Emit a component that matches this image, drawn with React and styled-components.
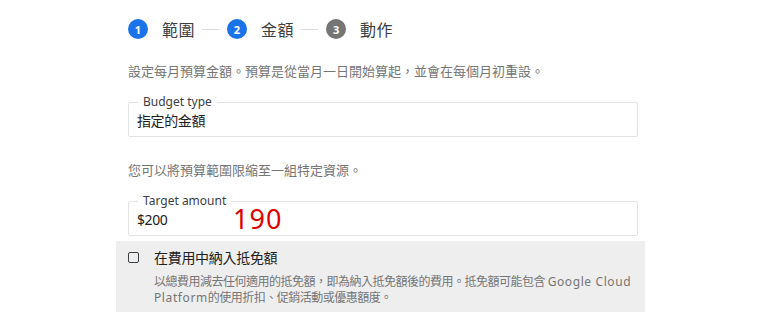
import React from "react";
import styled, { createGlobalStyle } from "styled-components";

const GlobalStyle = createGlobalStyle`
  body {
    margin: 0;
    background: #fff;
    font-family: "Noto Sans", "Noto Sans CJK TC", sans-serif;
    color: #212121;
  }
`;

const Page = styled.div`
  width: 760px;
  height: 330px;
  overflow: hidden;
`;

const Column = styled.div`
  margin-left: 128px;
  width: 510px;
  padding-top: 19px;
`;

// Stepper
const Steps = styled.div`
  display: flex;
  align-items: center;
  height: 20px;
`;

const StepDot = styled.span`
  width: 20px;
  height: 20px;
  border-radius: 50%;
  background: ${({ active }) => (active ? "#1a73e8" : "#757575")};
  color: #fff;
  font-size: 11px;
  font-weight: 700;
  display: flex;
  align-items: center;
  justify-content: center;
  flex: 0 0 auto;
`;

const StepLabel = styled.span`
  margin-left: 14px;
  font-size: 16px;
  color: #3c4043;
  letter-spacing: 0.5px;
`;

const StepLine = styled.span`
  width: 17px;
  height: 1px;
  background: #dadce0;
  margin: 0 8px 0 7px;
`;

const Desc = styled.p`
  margin: ${({ top }) => top}px 0 0;
  font-size: 13px;
  line-height: 18px;
  color: #757575;
  letter-spacing: 0;
`;

const Field = styled.fieldset`
  position: relative;
  margin: ${({ top }) => top}px 0 0;
  padding: 0 8px 4px;
  height: 41px;
  box-sizing: border-box;
  border: 1px solid #e3e3e3;
  border-radius: 2px;
`;

const Legend = styled.legend`
  font-size: 12px;
  color: #3c4043;
  padding: 0 5px;
  margin-left: 1px;
  line-height: 12px;
`;

const Value = styled.div`
  font-size: 14px;
  line-height: 18px;
  margin-top: 4px;
  color: #212121;
  letter-spacing: -0.4px;
`;

const Overlay = styled.span`
  position: absolute;
  left: 104px;
  top: -5px;
  font-size: 27px;
  line-height: 34px;
  color: #e00000;
  letter-spacing: 1px;
`;

const Panel = styled.div`
  margin: 5px 0 0 116px;
  width: 529px;
  height: 71px;
  background: #eeeeee;
  display: flex;
  box-sizing: border-box;
  padding: 9px 0 0 12px;
`;

const Box = styled.span`
  width: 9px;
  height: 9px;
  border: 1.5px solid #3c4043;
  border-radius: 2px;
  margin-top: 2px;
  flex: 0 0 auto;
`;

const PanelText = styled.div`
  margin-left: 15px;
`;

const CheckLabel = styled.div`
  font-size: 14px;
  line-height: 16px;
  color: #212121;
  letter-spacing: -0.3px;
`;

const Hint = styled.div`
  margin-top: 8px;
  font-size: 12px;
  line-height: 16px;
  color: #757575;
  letter-spacing: -0.5px;
  width: 490px;
`;

const Latin = styled.span`
  letter-spacing: 0.6px;
`;

const steps = [
  { n: 1, label: "範圍", active: true },
  { n: 2, label: "金額", active: true },
  { n: 3, label: "動作", active: false },
];

export default function App() {
  return (
    <Page>
      <GlobalStyle />
      <Column>
        <Steps>
          {steps.map((s, i) => (
            <React.Fragment key={s.n}>
              <StepDot active={s.active}>{s.n}</StepDot>
              <StepLabel>{s.label}</StepLabel>
              {i < steps.length - 1 && <StepLine />}
            </React.Fragment>
          ))}
        </Steps>
        <Desc top={23}>設定每月預算金額。預算是從當月一日開始算起，並會在每個月初重設。</Desc>
        <Field top={16}>
          <Legend>Budget type</Legend>
          <Value>指定的金額</Value>
        </Field>
        <Desc top={24}>您可以將預算範圍限縮至一組特定資源。</Desc>
        <Field top={16}>
          <Legend>Target amount</Legend>
          <Value>$200</Value>
          <Overlay>190</Overlay>
        </Field>
      </Column>
      <Panel>
        <Box />
        <PanelText>
          <CheckLabel>在費用中納入抵免額</CheckLabel>
          <Hint>
            以總費用減去任何適用的抵免額，即為納入抵免額後的費用。抵免額可能包含 <Latin>Google Cloud Platform</Latin>的使用折扣、促銷活動或優惠額度。
          </Hint>
        </PanelText>
      </Panel>
    </Page>
  );
}
